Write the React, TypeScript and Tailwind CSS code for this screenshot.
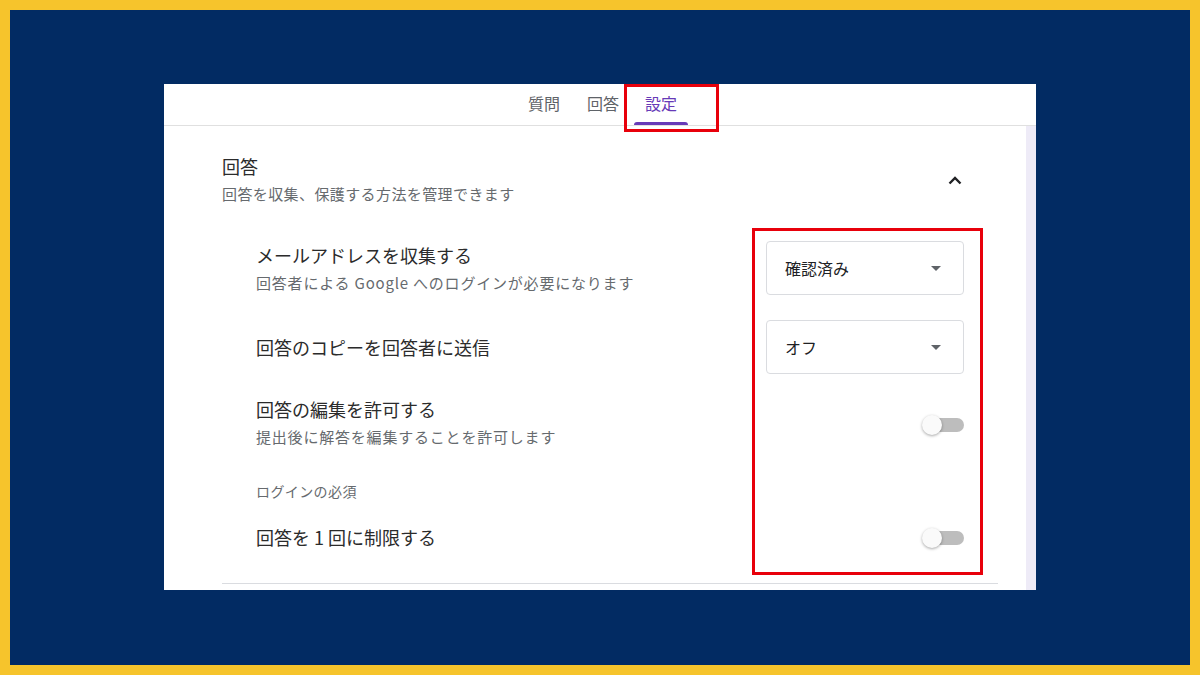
import React from 'react';

const font = { fontFamily: '"Noto Sans CJK JP", "Noto Sans", Roboto, sans-serif' };

function Dropdown({ value }: { value: string }) {
  return (
    <div className="flex h-[54px] w-[198px] items-center justify-between rounded border border-[#dadce0] pl-[18px] pr-[22px] text-[16px] text-[#202124]">
      <span>{value}</span>
      <svg width="10" height="5" viewBox="0 0 10 5">
        <path d="M0 0h10L5 5z" fill="#5f6368" />
      </svg>
    </div>
  );
}

function Toggle({ offset = 'mt-[2px]' }: { offset?: string }) {
  return (
    <div className={`relative h-[20px] w-[42px] ${offset}`}>
      <div className="absolute left-[6px] top-[3px] h-[14px] w-[36px] rounded-full bg-[#bdbdbd]" />
      <div className="absolute left-0 top-0 h-[20px] w-[20px] rounded-full bg-[#fafafa] shadow-[0_1px_3px_rgba(0,0,0,0.35)]" />
    </div>
  );
}

function SettingRow({ title, note, children }: { title: string; note?: string; children: React.ReactNode }) {
  return (
    <div className="flex items-center justify-between pl-[34px]">
      <div className="flex flex-col gap-[6px]">
        <div className="text-[18px] leading-[24px] text-[#2b2b2b]">{title}</div>
        {note && <div className="text-[15px] leading-[20px] tracking-[0.8px] text-[#666a6e]">{note}</div>}
      </div>
      {children}
    </div>
  );
}

export default function App() {
  return (
    <div className="h-[675px] w-[1200px] bg-[#f6c42c] p-[10px]" style={font}>
      <div className="h-full w-full bg-[#022b63] pl-[154px] pt-[74px]">
        <div className="relative flex h-[506px] w-[872px] flex-col bg-white">
          {/* tabs */}
          <div className="flex h-[42px] items-end justify-center border-b border-[#e0e0e0] pl-[16px] text-[16px]">
            <div className="pb-[10px] text-[#5f6368]">質問</div>
            <div className="ml-[27px] pb-[10px] text-[#5f6368]">回答</div>
            <div className="ml-[15px] flex flex-col items-center text-[#673ab7]">
              <span className="pb-[7px]">設定</span>
              <div className="h-[3px] w-[54px] rounded-t bg-[#673ab7]" />
            </div>
          </div>

          <div className="flex flex-1">
            <div className="flex flex-1 flex-col pl-[58px] pt-[28px]">
              <div className="flex items-start justify-between pr-[64px]">
                <div className="flex flex-col gap-[6px]">
                  <div className="text-[18px] leading-[24px] text-[#2b2b2b]">回答</div>
                  <div className="text-[15px] leading-[20px] tracking-[0.4px] text-[#666a6e]">回答を収集、保護する方法を管理できます</div>
                </div>
                <svg width="14" height="9" viewBox="0 0 14 9" className="mt-[22px]">
                  <path d="M1.5 7.5L7 2l5.5 5.5" stroke="#202124" strokeWidth="2.4" fill="none" />
                </svg>
              </div>

              <div className="mt-[37px] flex flex-col pr-[62px]">
                <SettingRow title="メールアドレスを収集する" note="回答者による Google へのログインが必要になります">
                  <Dropdown value="確認済み" />
                </SettingRow>
                <div className="mt-[25px]">
                  <SettingRow title="回答のコピーを回答者に送信">
                    <Dropdown value="オフ" />
                  </SettingRow>
                </div>
                <div className="mt-[23px]">
                  <SettingRow title="回答の編集を許可する" note="提出後に解答を編集することを許可します">
                    <Toggle offset="mt-[6px]" />
                  </SettingRow>
                </div>
                <div className="mt-[34px] pl-[34px] text-[14px] leading-[20px] tracking-[0.4px] text-[#666a6e]">ログインの必須</div>
                <div className="mt-[24px]">
                  <SettingRow title="回答を 1 回に制限する">
                    <Toggle />
                  </SettingRow>
                </div>
              </div>

              <div className="mr-[28px] mt-[34px] border-t border-[#dadce0]" />
            </div>
            <div className="w-[10px] bg-[#eeebf7]" />
          </div>

          {/* highlight frames */}
          <div className="absolute left-[460px] top-0 h-[48px] w-[95px] border-[3px] border-[#e8000b]" />
          <div className="absolute left-[588px] top-[144px] h-[347px] w-[231px] border-[3px] border-[#e8000b]" />
        </div>
      </div>
    </div>
  );
}
